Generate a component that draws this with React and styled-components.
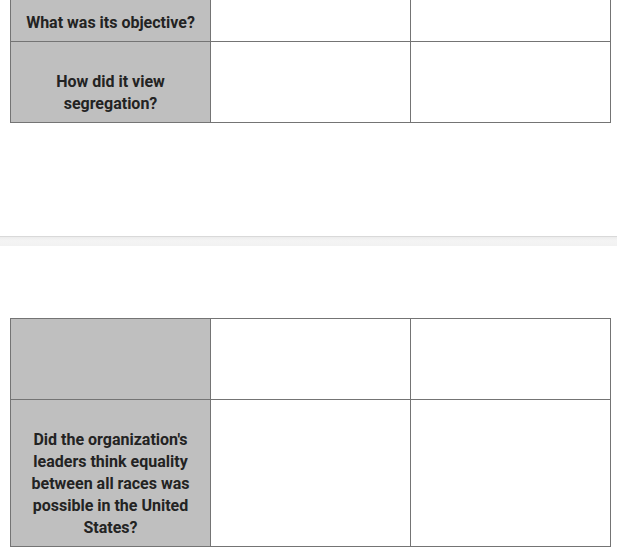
import React from "react";
import styled, { createGlobalStyle } from "styled-components";

const GlobalStyle = createGlobalStyle`
  html, body {
    margin: 0;
    padding: 0;
    background: #ffffff;
    overflow: hidden;
  }
  body {
    font-family: Roboto, "Liberation Sans", Arial, sans-serif;
  }
`;

const Page = styled.div`
  display: flex;
  flex-direction: column;
  margin-top: -18px;
`;

const Section = styled.div`
  padding: 0 10px;
`;

const Table = styled.div`
  display: grid;
  grid-template-columns: 200px 200px 200px;
  border-top: 1px solid #747474;
  border-left: 1px solid #747474;
  width: 601px;
  box-sizing: border-box;
`;

const Cell = styled.div`
  box-sizing: border-box;
  min-height: ${(props) => (props.short ? 59 : 81)}px;
  padding: 29px 14px 7px;
  border-right: 1px solid #747474;
  border-bottom: 1px solid #747474;
  background: ${(props) => (props.header ? "#bfbfbf" : "#ffffff")};
  color: #232323;
  font-size: 16px;
  font-weight: 700;
  line-height: 22px;
  text-align: center;
`;

const Divider = styled.div`
  height: 10px;
  margin: 113px 0 72px;
  box-sizing: border-box;
  border-top: 1px solid #d9d9d9;
  background: linear-gradient(#ececec, #f4f4f4 40%, #f2f2f2);
`;

const Row = ({ label, short }) => (
  <>
    <Cell header short={short}>
      {label}
    </Cell>
    <Cell short={short} />
    <Cell short={short} />
  </>
);

const App = () => (
  <React.Fragment>
    <GlobalStyle />
    <Page>
      <Section>
        <Table>
          <Row label="What was its objective?" short />
          <Row label="How did it view segregation?" />
        </Table>
      </Section>
      <Divider />
      <Section>
        <Table>
          <Row label="" />
          <Row label="Did the organization's leaders think equality between all races was possible in the United States?" />
        </Table>
      </Section>
    </Page>
  </React.Fragment>
);

export default App;
